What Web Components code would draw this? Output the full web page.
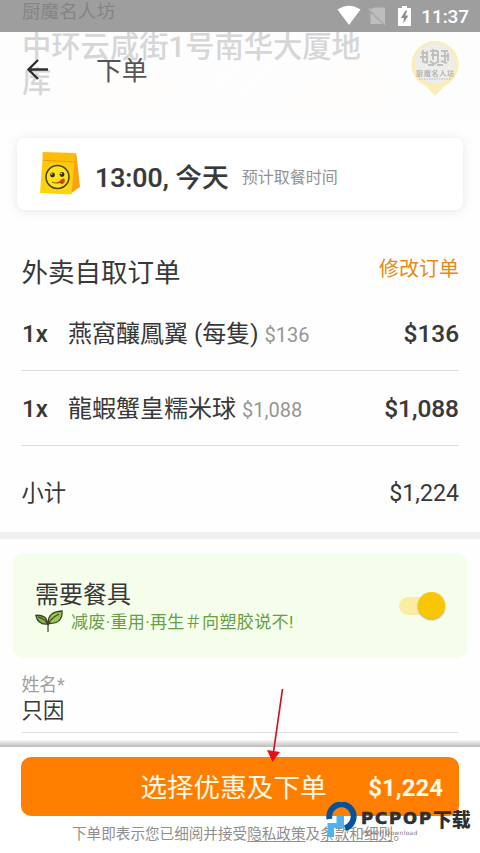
<!DOCTYPE html>
<html lang="zh-CN">
<head>
<meta charset="utf-8">
<title>下单</title>
<style>
html,body{margin:0;padding:0;background:#fefefe}
body{font-family:Roboto,"Noto Sans CJK SC",sans-serif;color:#383838}
</style>
</head>
<body>
<checkout-page></checkout-page>
<script>
const define = (name, html) => {
  const t = document.createElement('template');
  t.innerHTML = html;
  customElements.define(name, class extends HTMLElement {
    constructor() {
      super();
      this.attachShadow({mode: 'open'}).appendChild(t.content.cloneNode(true));
    }
  });
};

define('status-bar', `<style>
:host{display:flex;height:32px;box-sizing:border-box;background:#9f9e9e;padding:0 11px 0 22px;justify-content:space-between}
.ghost{font-size:18.6px;line-height:24px;color:#858484}
.sys{display:flex;align-items:center;color:#fff}
svg{display:block}
.time{font-size:19px;line-height:32px;letter-spacing:-.1px;font-weight:500;margin:1px 0 0 9px}
</style>
<div class="ghost">厨魔名人坊</div>
<div class="sys">
<svg width="78" height="32" viewBox="0 0 78 32"><path d="M3.500 9.600Q15 2 26.500 9.600L15 25Z" fill="#fff"/>
<path d="M41 7.500h10v16.500L36.500 9Z M36.500 12.500V24h12Z" fill="#bebebe"/><path d="M35 8.500L51 24.500" stroke="#b9b9b9" stroke-width="1.600"/>
<path d="M68 6h5v2h4v18H64V8h4Z" fill="#fff"/><path d="M71.500 10.500L67 18h3l-.8 5.500L74.500 15.500h-3.300l2-5Z" fill="#8b8b8b"/></svg>
<span class="time">11:37</span></div>`);

define('shop-pin', `<style>:host{display:block;width:50px;height:62px}svg{display:block}text{font-family:"Noto Sans CJK SC",sans-serif}</style>
<svg width="50" height="62" viewBox="0 0 50 62">
<path d="M25 59L15.500 49A23.500 23.500 0 1 1 34.500 49Z" fill="#fbedb9"/>
<circle cx="25" cy="26.500" r="20" fill="#ededeb"/>
<g stroke="#c0bfbd" stroke-width="1.900" fill="none"><path d="M11 16h7M13 13v12M10 20h8M17 14v12M20 14h8M21 18h8M23 12v11M28 14v12M31 14h7M31 19h8M35 13v12M38 16v8M12 24l5 2M20 24l4 3 5-3M31 24l6 2M18 28h6M27 28h6"/></g>
<text x="6" y="38.500" font-size="7" font-weight="500" fill="#aaa7a4" textLength="38">厨魔名人坊</text>
<path d="M9 42H41" stroke="#c9c7c4" stroke-width="1.500" stroke-dasharray="1.500 1"/></svg>`);

define('page-header', `<style>
:host{display:flow-root;position:relative;height:88px;background:#fdfdfd}
.scene{position:absolute;left:0;top:0}
.address{position:relative;margin:-2px 0 0 22px;font-size:29.3px;line-height:35px;font-weight:500;color:#d6d6d6;width:342px;word-break:break-all}
.bar{position:absolute;left:26px;top:20px;height:36px;display:flex;align-items:center;gap:47px}
.title{font-size:25.8px;line-height:36px;color:#555;margin-top:2px}
shop-pin{position:absolute;left:410px;top:5px}
svg{display:block}
</style>
<svg class="scene" width="480" height="88"><path d="M55 63L92 35H160L180 50L135 88H75Z M280 66L360 22L400 62L370 87H300Z" fill="#fefdfb"/><path d="M220 60Q216 40 240 38M240 60L285 24" stroke="#fefefe" stroke-width="7" fill="none"/></svg>
<div class="address">中环云咸街1号南华大厦地库</div>
<shop-pin></shop-pin>
<div class="bar"><svg width="23" height="22" viewBox="0 0 23 22"><path d="M12 1L2.500 10.500L12 20M2.500 10.500H22" fill="none" stroke="#303030" stroke-width="2.400"/></svg><span class="title">下单</span></div>`);

define('lunch-bag', `<style>:host{display:block;width:42px;height:46px}svg{display:block}</style>
<svg width="42" height="46" viewBox="0 0 42 46"><defs><linearGradient id="b" x2="0" y2="1"><stop stop-color="#fdc50b"/><stop offset="1" stop-color="#fed50d"/></linearGradient></defs>
<path d="M35 2L37.500 4L41 36L31 43Z" fill="#f9a312"/>
<path d="M4 2L36 3L32.500 43.500L1 42Z" fill="url(#b)"/>
<path d="M3.500 1L37 2L36 10L4 9Z" fill="#fbbd08"/><path d="M4 9.300L36 11" stroke="#e99b04" stroke-width="1"/>
<circle cx="18.500" cy="26" r="11.500" fill="#ffe21c" stroke="#4a4020" stroke-width="1.500"/>
<circle cx="13.500" cy="24" r="2.400" fill="#382919"/><circle cx="23" cy="23.500" r="2.400" fill="#382919"/><circle cx="12.800" cy="23" r=".8" fill="#fff"/><circle cx="22.300" cy="22.500" r=".8" fill="#fff"/>
<path d="M13 31Q19 34 25 28" fill="none" stroke="#a6581b" stroke-width="1.200"/><path d="M20.500 30.500Q23.500 26 25.500 28Q26.500 32 23.500 33Q20.500 33 20.500 30.500Z" fill="#df3721"/></svg>`);

define('pickup-card', `<style>
:host{display:flex;align-items:center;box-sizing:border-box;height:72px;margin:18px 17px 0;padding:0 23px 0 22px;background:#fff;border-radius:8px;box-shadow:0 1px 12px rgba(0,0,0,.1)}
b{font-weight:500;font-size:26.7px;line-height:36px;margin:7px 0 0 14px;white-space:nowrap;-webkit-text-stroke:.2px #383838}
small{font-size:16px;line-height:24px;color:#929292;margin:7px 0 0 13px}
</style><lunch-bag></lunch-bag><b><slot name="time"></slot></b><small><slot name="label"></slot></small>`);

define('section-title', `<style>:host{display:flex;justify-content:space-between;align-items:center;height:40px;margin:41px 21px 0 21.500px}
h2{margin:4px 0 0;font-weight:400;font-size:26.5px;line-height:38px}a{font-size:20px;line-height:30px;color:#e98812;margin-bottom:5px}</style><h2><slot></slot></h2><a><slot name="action"></slot></a>`);

define('order-line', `<style>:host{display:flex;align-items:baseline;box-sizing:border-box;margin:0 21px;padding:0 0 0 1px;border-bottom:1px solid #dedede;height:75px;line-height:76px}
.q{width:46px;font-weight:500;font-size:24px}.n{font-size:24px}.u{flex:1;font-size:20px;color:#969696;margin-left:6px}.t{font-weight:500;font-size:24.4px}.q,.t{-webkit-text-stroke:.1px #383838}</style>
<span class="q"><slot name="qty"></slot></span><span class="n"><slot></slot></span><span class="u"><slot name="unit"></slot></span><span class="t"><slot name="total"></slot></span>`);

define('subtotal-line', `<style>:host{display:flex;justify-content:space-between;box-sizing:border-box;height:86px;padding:0 21px 0 21.500px;line-height:94px;font-size:22.300px}
.v{font-size:23.2px}</style><span><slot></slot></span><span class="v"><slot name="value"></slot></span>`);

define('toggle-switch', `<style>:host{display:flex;align-items:center;justify-content:flex-end;width:46px;height:18px;border-radius:9px;background:#faeda3}
i{width:27px;height:27px;border-radius:50%;background:#fac602;box-shadow:0 1px 2px rgba(80,80,50,.5)}</style><i></i>`);

define('sprout-icon', `<style>:host{display:block;width:28px;height:22px}svg{display:block}</style>
<svg width="28" height="22" viewBox="0 0 28 22"><path d="M12.500 14Q3 15 .8 5.300Q12 4.500 12.500 14Z" fill="#79b943" stroke="#453c24" stroke-width="1.300"/><path d="M13.500 13.500Q12 2 27 1Q28 14 13.500 13.500Z" fill="#91ca50" stroke="#453c24" stroke-width="1.300"/><path d="M3 7Q11 9 13 15V22M24 4Q14 9 13 16" fill="none" stroke="#453c24" stroke-width="1.200"/></svg>`);

define('cutlery-card', `<style>:host{display:flex;justify-content:space-between;align-items:center;box-sizing:border-box;height:105px;margin:14px 13px 0;padding:0 22px 0 22px;background:#f4feea;border-radius:10px}
.h{font-size:24px;line-height:30px;margin-top:4px}.s{display:flex;gap:8px;align-items:center;color:#689e45;font-size:17.100px;line-height:25px;white-space:nowrap}
.s div{letter-spacing:.28px}sprout-icon{margin:-3px 0 0 0}</style>
<div><div class="h"><slot></slot></div><div class="s"><sprout-icon></sprout-icon><div><slot name="note"></slot></div></div></div><toggle-switch></toggle-switch>`);

define('name-field', `<style>:host{display:block;margin:14px 22px 0 21.500px;height:60px;border-bottom:1px solid #dedede}
label{display:block;font-size:17.800px;line-height:26px;color:#a0a0a0}div{font-size:21.400px;line-height:26px}</style><label><slot name="label"></slot></label><div><slot></slot></div>`);

define('order-footer', `<style>:host{display:block;height:106px;background:#fff;margin-top:auto;position:relative}
.shade{height:7px;margin-top:-7px;background:linear-gradient(#f5f5f5,#bcbcbc)}
button{display:grid;grid-template-columns:1fr auto 1fr;align-items:center;box-sizing:border-box;width:438px;height:59px;margin:10px 21px 0;padding:2px 16px 0;border:0;border-radius:10px;background:#ff7e00;color:#fff8e4;font:inherit}
.a{grid-column:2;font-size:26.600px;line-height:40px;margin-left:-13px}.p{font-size:24px;font-weight:700;text-align:right}
p{margin:7px 0 0 72px;font-size:14.600px;line-height:22px;color:#8e8e8e;white-space:nowrap}u{text-underline-offset:2px}</style>
<div class="shade"></div><button><span class="a"><slot></slot></span><span class="p"><slot name="price"></slot></span></button>
<p>下单即表示您已细阅并接受<u>隐私政策</u>及<u>条款和细则</u>。</p>`);

define('pointer-arrow', `<style>:host{position:absolute;left:264px;top:686px;width:24px;height:78px}svg{display:block}</style>
<svg width="24" height="78"><path d="M18.500 3L9.500 66" stroke="#d0141b" stroke-width="1.700"/><path d="M3 64L16 66L8.500 76Z" fill="#e51218"/></svg>`);

define('site-mark', `<style>:host{position:absolute;left:326px;top:802px;width:150px;height:40px;display:flex;gap:4px}
svg{display:block;flex:none}.w{padding-top:7px}.l{display:flex;align-items:center;height:20px;white-space:nowrap;color:#303030}
.e{font:bold 16.500px/20px "DejaVu Sans",sans-serif;letter-spacing:1.900px;-webkit-text-stroke:.6px #303030}.c{font:900 18.900px/20px "Noto Sans CJK SC",sans-serif}
.d{font:6px/7px "DejaVu Sans",sans-serif;letter-spacing:.3px;color:#777;white-space:nowrap;margin-left:1px}</style>
<svg width="31" height="38" viewBox="0 0 31 38"><path d="M3.500 17A12.200 12.200 0 1 1 19 26.200" fill="none" stroke="#07539b" stroke-width="6"/><path d="M10.500 13H18V26H8V35H1.500V21H10.500Z" fill="#4cb3ef"/></svg>
<div class="w"><div class="l"><span class="e">PCPOP</span><span class="c">下载</span></div><div class="d">PCPOP Download</div></div>`);

define('checkout-page', `<style>:host{display:flex;flex-direction:column;position:relative;width:480px;height:853px;overflow:hidden;background:#fefefe}
:host>*{flex-shrink:0}status-bar{position:relative;z-index:1}.gap{height:5px}.band{height:7px;background:#f0f0f0}</style>
<status-bar></status-bar><page-header></page-header>
<pickup-card><span slot="time">13:00, 今天</span><span slot="label">预计取餐时间</span></pickup-card>
<section-title>外卖自取订单<span slot="action">修改订单</span></section-title>
<div class="gap"></div>
<order-line><span slot="qty">1x</span>燕窩釀鳳翼 (每隻)<span slot="unit">$136</span><span slot="total">$136</span></order-line>
<order-line><span slot="qty">1x</span>龍蝦蟹皇糯米球<span slot="unit">$1,088</span><span slot="total">$1,088</span></order-line>
<subtotal-line>小计<span slot="value">$1,224</span></subtotal-line>
<div class="band"></div>
<cutlery-card>需要餐具<span slot="note">减废·重用·再生＃向塑胶说不!</span></cutlery-card>
<name-field><span slot="label">姓名*</span>只因</name-field>
<order-footer>选择优惠及下单<span slot="price">$1,224</span></order-footer>
<pointer-arrow></pointer-arrow><site-mark></site-mark>`);
</script>
</body>
</html>
